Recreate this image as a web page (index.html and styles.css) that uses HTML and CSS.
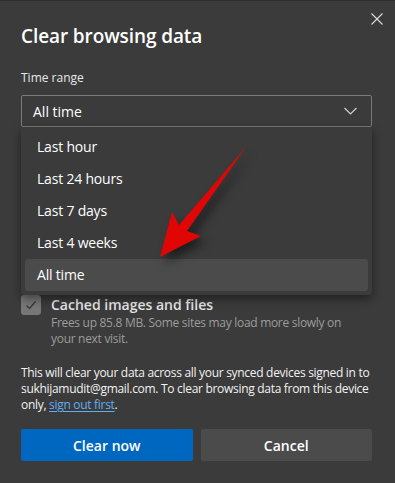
FILE: index.html
```html
<!DOCTYPE html>
<html lang="en">
<head>
    <meta charset="UTF-8">
    <meta name="viewport" content="width=device-width, initial-scale=1.0">
    <title>Clear browsing data</title>
    <link rel="stylesheet" href="styles.css">
</head>
<body>
    <div class="dialog">
        <button class="close-btn" aria-label="Close">
            <svg width="12" height="12" viewBox="0 0 12 12" fill="none" stroke="currentColor" stroke-width="1.1">
                <path d="M0.5 0.5L11.5 11.5"></path>
                <path d="M11.5 0.5L0.5 11.5"></path>
            </svg>
        </button>

        <h1>Clear browsing data</h1>

        <div class="field-label">Time range</div>
        <div class="select-wrap">
            <div class="select">
                <span>All time</span>
                <svg width="13" height="8" viewBox="0 0 13 8" fill="none" stroke="currentColor" stroke-width="1.2">
                    <path d="M0.5 1L6.5 7L12.5 1"></path>
                </svg>
            </div>

            <!-- открытый список выбора, перекрывает верх списка данных -->
            <ul class="menu">
                <li>Last hour</li>
                <li>Last 24 hours</li>
                <li>Last 7 days</li>
                <li>Last 4 weeks</li>
                <li class="active">All time</li>
            </ul>
        </div>

        <div class="data-list">
            <div class="data-item">
                <div class="checkbox">
                    <svg width="14" height="14" viewBox="0 0 14 14" fill="none" stroke="currentColor" stroke-width="1.4">
                        <path d="M2.5 7.5L5.5 10.5L11.5 3.5"></path>
                    </svg>
                </div>
                <div class="data-text">
                    <div class="data-title">Cached images and files</div>
                    <div class="data-desc">Frees up 85.8 MB. Some sites may load more slowly on your next visit.</div>
                </div>
            </div>
        </div>

        <p class="sync-note">
            This will clear your data across all your synced devices signed in to
            sukhijamudit@gmail.com. To clear browsing data from this device
            only, <a href="#">sign out first</a>.
        </p>

        <div class="actions">
            <button class="btn btn-primary">Clear now</button>
            <button class="btn btn-secondary">Cancel</button>
        </div>
    </div>

    <svg class="pointer" width="395" height="483" viewBox="0 0 395 483">
        <path d="M246 147L187 231L201 236L160 257L172 212L179 225Z" fill="#e00606"></path>
    </svg>
</body>
</html>
```

FILE: styles.css
```css
body {
    margin: 0;
    padding: 0;
    background: #3b3b3b;
    font-family: "Segoe UI", "Open Sans", sans-serif;
    color: #fff;
    width: 395px;
    height: 483px;
    overflow: hidden;
    position: relative;
}
.dialog {
    border-top: 1px solid #2c2c2c;
    padding: 21px 23px 0 21px;
    position: relative;
}
.close-btn {
    position: absolute;
    top: 12px;
    right: 12px;
    width: 12px;
    height: 12px;
    padding: 0;
    border: none;
    background: none;
    color: #dcdcdc;
    display: flex;
}
h1 {
    margin: 0;
    font-size: 19px;
    line-height: 28px;
    font-weight: 600;
    letter-spacing: -0.1px;
}
.field-label {
    margin-top: 19px;
    font-size: 12px;
    line-height: 18px;
    color: #e8e8e8;
}
.select-wrap {
    position: relative;
    margin-top: 8px;
}
.select {
    height: 30px;
    border: 1px solid #7a7a7a;
    border-radius: 2px;
    padding: 0 14px 0 11px;
    display: flex;
    align-items: center;
    justify-content: space-between;
    font-size: 14px;
}
.select svg {
    color: #cfcfcf;
}
.menu {
    position: absolute;
    top: 100%;
    left: 0;
    right: 0;
    margin: 0;
    padding: 4px 4px;
    list-style: none;
    background: #3b3b3b;
    border-radius: 0 0 4px 4px;
    box-shadow: 0 4px 10px rgba(0, 0, 0, 0.45);
    z-index: 2;
}
.menu li {
    height: 32px;
    line-height: 32px;
    padding-left: 12px;
    font-size: 14px;
    letter-spacing: -0.2px;
    border-radius: 3px;
}
.menu li.active {
    background: #4b4b4b;
}
.data-list {
    padding-top: 168px;
    display: flex;
    flex-direction: column;
    gap: 16px;
}
.data-item {
    display: flex;
    gap: 10px;
}
.data-text {
    padding-right: 26px;
}
.checkbox {
    width: 20px;
    height: 20px;
    flex-shrink: 0;
    border-radius: 3px;
    background: #777;
    color: #3a3a3a;
    display: flex;
    align-items: center;
    justify-content: center;
}
.data-title {
    font-size: 14px;
    line-height: 20px;
    font-weight: 600;
    color: #e4e4e4;
}
.data-desc {
    font-size: 12px;
    line-height: 16px;
    letter-spacing: -0.3px;
    color: #9c9c9c;
}
.sync-note {
    margin: 18px 0 0;
    font-size: 12px;
    line-height: 16px;
    letter-spacing: -0.3px;
    color: #f2f2f2;
}
.sync-note a {
    color: #63adf2;
    text-decoration: underline;
    text-underline-offset: 2px;
}
.actions {
    margin-top: 16px;
    display: flex;
    gap: 8px;
}
.btn {
    flex: 1;
    height: 32px;
    border: none;
    border-radius: 2px;
    font-family: inherit;
    font-size: 14px;
    font-weight: 600;
    color: #fff;
}
.btn-primary {
    background: #0067c0;
}
.btn-secondary {
    background: #4b4b4b;
}
.pointer {
    position: absolute;
    top: 0;
    left: 0;
    pointer-events: none;
    z-index: 5;
    filter: drop-shadow(5px 6px 5px rgba(0, 0, 0, 0.5));
}
```
